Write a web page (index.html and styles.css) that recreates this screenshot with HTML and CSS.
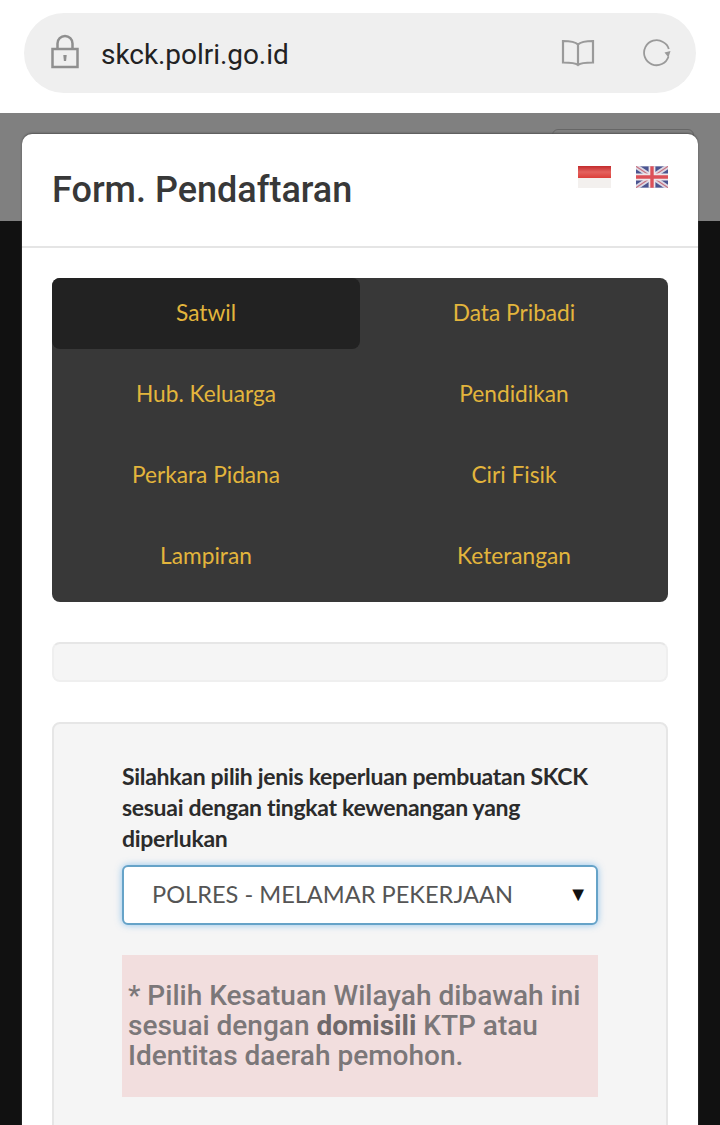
FILE: index.html
```html
<!DOCTYPE html>
<html>
<head>
    <title>Form. Pendaftaran</title>
    <link rel="stylesheet" href="styles.css">
</head>

<body>

<header class="browser-bar">
    <div class="address-pill">
        <svg class="icon-lock" width="30" height="36" viewBox="0 0 30 36">
            <path d="M7.500 15V9.500a7.500 7.500 0 0 1 15 0V15" fill="none" stroke="#8f8f8f" stroke-width="2.500"/>
            <rect x="2.500" y="15" width="25" height="18" fill="none" stroke="#8f8f8f" stroke-width="2.500"/>
            <path d="M13.300 21h3.400l-.6 6h-2.200z" fill="#8f8f8f"/>
        </svg>
        <span class="address-text">skck.polri.go.id</span>
        <svg class="icon-book" width="34" height="28" viewBox="0 0 34 28">
            <path d="M17 5.500C14 2.500 8 2 2 2V23.500C8 23.500 14 23.500 17 26C20 23.500 26 23.500 32 23.500V2C26 2 20 2.500 17 5.500V26" fill="none" stroke="#9a9a9a" stroke-width="2.200"/>
        </svg>
        <svg class="icon-reload" width="30" height="30" viewBox="0 0 30 30">
            <path d="M26.500 18.500A12.500 12.500 0 1 1 21 4C24 5.500 26 8 26.800 11" fill="none" stroke="#9a9a9a" stroke-width="1.800"/>
            <path d="M22.500 14.500L28.500 13L26.500 19.500z" fill="#9a9a9a"/>
        </svg>
    </div>
</header>

<div class="backdrop">
    <div class="modal">
        <div class="modal-header">
            <h1 class="modal-title">Form. Pendaftaran</h1>
            <div class="flags">
                <svg width="33" height="22" viewBox="0 0 33 22">
                    <defs>
                        <linearGradient id="flagRed" x1="0" y1="0" x2="0" y2="1">
                            <stop offset="0" stop-color="#c22a2c"/>
                            <stop offset="0.500" stop-color="#e4625e"/>
                            <stop offset="1" stop-color="#dc3f3a"/>
                        </linearGradient>
                    </defs>
                    <rect width="33" height="12" fill="url(#flagRed)"/>
                    <rect y="12" width="33" height="10" fill="#f3f0ee"/>
                </svg>
                <svg width="32" height="22" viewBox="0 0 33 22">
                    <rect width="33" height="22" fill="#4a5490"/>
                    <path d="M0 0L33 22M33 0L0 22" stroke="#dcd8e4" stroke-width="5"/>
                    <path d="M0 0L33 22M33 0L0 22" stroke="#c9707e" stroke-width="1.200"/>
                    <path d="M16.500 0V22M0 11H33" stroke="#eee6ea" stroke-width="7"/>
                    <path d="M16.500 0V22M0 11H33" stroke="#dc5058" stroke-width="3.500"/>
                </svg>
            </div>
        </div>

        <div class="modal-body">
            <nav class="tabs">
                <a class="tab tab-active">Satwil</a>
                <a class="tab">Data Pribadi</a>
                <a class="tab">Hub. Keluarga</a>
                <a class="tab">Pendidikan</a>
                <a class="tab">Perkara Pidana</a>
                <a class="tab">Ciri Fisik</a>
                <a class="tab">Lampiran</a>
                <a class="tab">Keterangan</a>
            </nav>

            <div class="well well-empty"></div>

            <div class="well well-form">
                <label class="form-label" for="keperluan">Silahkan pilih jenis keperluan pembuatan SKCK sesuai dengan tingkat kewenangan yang diperlukan</label>
                <div class="select-box" id="keperluan">
                    <span>POLRES - MELAMAR PEKERJAAN</span>
                    <span class="select-arrow">▼</span>
                </div>
                <p class="notice">* Pilih Kesatuan Wilayah dibawah ini sesuai dengan <b>domisili</b> KTP atau Identitas daerah pemohon.</p>
            </div>
        </div>
    </div>
</div>

</body>
</html>
```

FILE: styles.css
```css
html, body {
    margin: 0;
    height: 1125px;
    overflow: hidden;
}

body {
    background-color: #111;
    font-family: Roboto, "Liberation Sans", sans-serif;
}

.browser-bar {
    background-color: #fff;
    height: 113px;
    padding: 13px 24px 0;
    box-sizing: border-box;
}

.address-pill {
    display: flex;
    align-items: center;
    height: 80px;
    padding: 0 24px 0 26px;
    background-color: #efefef;
    border-radius: 40px;
}

.icon-lock {
    margin-top: -2px;
}

.address-text {
    margin-left: 21px;
    padding-top: 2px;
    flex: 1;
    font-size: 28px;
    letter-spacing: -0.05px;
    color: #222;
}

.icon-book {
    margin-right: 47px;
}

.backdrop {
    height: 1012px;
    box-sizing: border-box;
    padding: 21px 22px 0;
    background: linear-gradient(#808080 108px, #111 108px);
    isolation: isolate;
    overflow: hidden;
}

.modal {
    position: relative;
    height: 1100px;
    background-color: #fff;
    border-radius: 10px 10px 0 0;
    box-shadow: 0 -1px 2px #555;
}

/* button of the page behind, only its top edge shows */
.modal::before {
    content: "";
    position: absolute;
    top: -5px;
    right: 4px;
    width: 140px;
    height: 10px;
    border: 1px solid #666;
    border-radius: 6px 6px 0 0;
    z-index: -1;
}

.modal-header {
    display: flex;
    justify-content: space-between;
    height: 112px;
    padding: 0 30px;
    border-bottom: 2px solid #e5e5e5;
}

.modal-title {
    margin: 34px 0 0;
    font-size: 36px;
    font-weight: 500;
    line-height: 44px;
    color: #383838;
}

.flags {
    display: flex;
    gap: 25px;
    margin-top: 32px;
    height: 22px;
    filter: blur(0.5px);
}

.modal-body {
    padding: 30px 30px 0;
}

.tabs {
    display: grid;
    grid-template-columns: 308px 308px;
    grid-auto-rows: 81px;
    background-color: #383838;
    border-radius: 8px;
}

.tab {
    height: 71px;
    box-sizing: border-box;
    padding-bottom: 2px;
    display: flex;
    align-items: center;
    justify-content: center;
    font-family: Lato, "Open Sans", sans-serif;
    font-size: 22.7px;
    color: #e3b53c;
    border-radius: 8px;
}

.tab-active {
    background-color: #222;
}

.well {
    box-sizing: border-box;
    background-color: #f5f5f5;
    border: 2px solid #efefef;
    border-top-color: #e6e6e6;
    border-radius: 8px;
}

.well-empty {
    height: 40px;
    margin-top: 40px;
}

.well-form {
    margin-top: 40px;
    height: 600px;
    padding: 37px 68px 0;
    border-color: #e6e6e6;
}

.form-label {
    display: block;
    font-family: Lato, "Open Sans", sans-serif;
    font-size: 23px;
    font-weight: 700;
    letter-spacing: -0.3px;
    line-height: 31px;
    color: #2b2b2b;
}

.select-box {
    display: flex;
    align-items: center;
    justify-content: space-between;
    box-sizing: border-box;
    height: 60px;
    margin-top: 11px;
    padding: 0 8px 3px 28px;
    background-color: #fff;
    border: 2px solid #66a3c8;
    border-radius: 6px;
    box-shadow: 0 0 7px rgba(102, 175, 233, 0.7);
    font-family: Lato, "Open Sans", sans-serif;
    font-size: 23.600px;
    color: #555;
}

.select-arrow {
    font-size: 20px;
    color: #111;
}

.notice {
    box-sizing: border-box;
    height: 142px;
    margin: 30px 0 0;
    padding: 26px 6px 0;
    background-color: #f2dede;
    font-size: 28px;
    font-weight: 500;
    line-height: 30px;
    color: #7b7779;
}

.notice b {
    font-weight: 700;
    color: #6e686a;
}
```
